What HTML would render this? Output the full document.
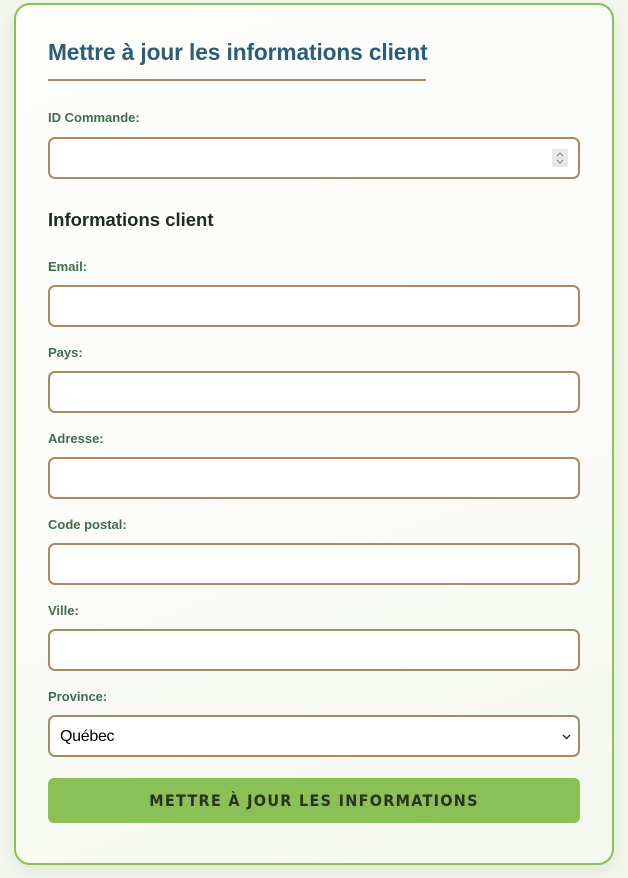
<!DOCTYPE html>
<html><head><meta charset="utf-8"><style>
*{box-sizing:border-box;margin:0;padding:0}
body{width:628px;height:878px;background:#f3f6ee;font-family:"Liberation Sans",sans-serif;position:relative;overflow:hidden}
.card{position:absolute;left:14px;top:3px;width:600px;height:862px;border:2px solid #8bc057;border-radius:16px;background:linear-gradient(160deg,#fdfdfb 0%,#fbfbf8 50%,#f4f8ef 100%);box-shadow:0 6px 16px rgba(120,150,90,0.15)}
.a{position:absolute}
h1{position:absolute;left:48px;top:39px;font-size:22.7px;font-weight:bold;color:#2a5e78;letter-spacing:-0.1px}
.ul{position:absolute;left:48px;top:79px;width:378px;height:2px;background:#a88b65}
.lab{position:absolute;left:48px;font-size:13px;font-weight:bold;color:#3e6e4e}
.in{position:absolute;left:48px;width:532px;height:42px;border:2px solid #a88b65;border-radius:7px;background:#fff}
h2{position:absolute;left:48px;top:209px;font-size:18.5px;font-weight:bold;color:#1f2a24}
.btn{position:absolute;left:48px;top:778px;width:532px;height:45px;background:#8bc057;border-radius:6px;text-align:center;line-height:46px;font-family:"DejaVu Sans Condensed","DejaVu Sans",sans-serif;font-weight:bold;font-size:16px;letter-spacing:1.3px;color:#2a3320}
</style></head><body>
<div class="card"></div>
<h1>Mettre à jour les informations client</h1>
<div class="ul"></div>
<div class="lab" style="top:110px">ID Commande:</div>
<div class="in" style="top:137px"><div class="a" style="right:10px;top:10px;width:16px;height:18px;background:#e6e6ec">
<svg class="a" style="left:3px;top:2px" width="10" height="14" viewBox="0 0 10 14"><path d="M2 5L5 2L8 5M2 9L5 12L8 9" fill="none" stroke="#888" stroke-width="1"/></svg></div></div>
<h2>Informations client</h2>
<div class="lab" style="top:259px">Email:</div>
<div class="in" style="top:285px"></div>
<div class="lab" style="top:345px">Pays:</div>
<div class="in" style="top:371px"></div>
<div class="lab" style="top:431px">Adresse:</div>
<div class="in" style="top:457px"></div>
<div class="lab" style="top:517px">Code postal:</div>
<div class="in" style="top:543px"></div>
<div class="lab" style="top:603px">Ville:</div>
<div class="in" style="top:629px"></div>
<div class="lab" style="top:689px">Province:</div>
<div class="in" style="top:715px;font-size:16px;line-height:40px;padding-left:10px;color:#000;letter-spacing:-0.3px">Québec
<svg class="a" style="right:7px;top:17px" width="9" height="6" viewBox="0 0 9 6"><path d="M1 1L4.5 4.5L8 1" fill="none" stroke="#222" stroke-width="1.4"/></svg></div>
<div class="btn">METTRE À JOUR LES INFORMATIONS</div>
</body></html>
